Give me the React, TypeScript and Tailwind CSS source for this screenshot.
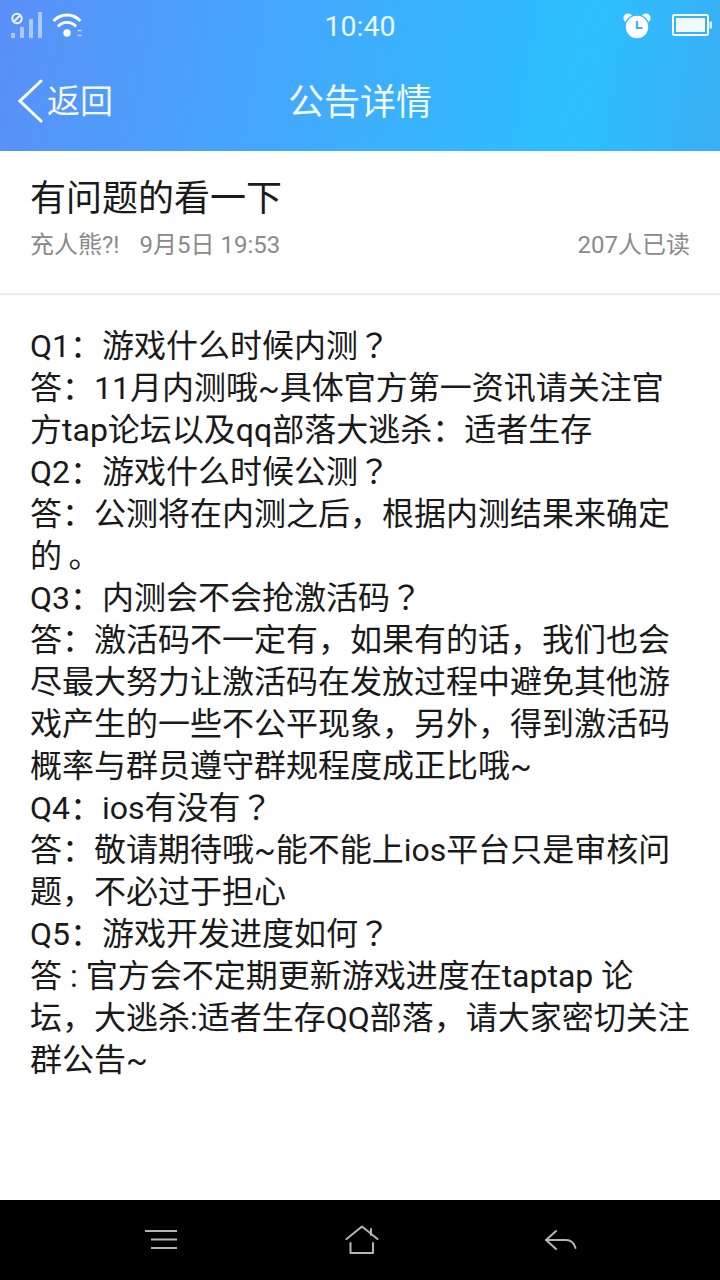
import React from 'react';

const Q = ({ text }: { text: string }) => (
  <p>
    {text}
    <span className="font-['Noto_Sans_CJK_JP'] leading-none">？</span>
  </p>
);

const StatusBar = () => (
  <div className="grid h-[52px] grid-cols-[1fr_auto_1fr] items-center px-[8px]">
    <div className="flex items-center gap-[8px] pl-[2px]">
      <svg width="34" height="28" viewBox="0 0 34 28" fill="white">
        <circle cx="7" cy="6.5" r="4.7" fill="none" stroke="white" strokeWidth="2" opacity="0.9" />
        <path d="M4 9.5 10 3.5" stroke="white" strokeWidth="2" opacity="0.9" />
        <rect x="1" y="21" width="4" height="5" opacity="0.5" />
        <rect x="10" y="15" width="4" height="11" opacity="0.5" />
        <rect x="19" y="7" width="4" height="19" opacity="0.5" />
        <rect x="28" y="0" width="4" height="26" opacity="0.5" />
      </svg>
      <svg width="32" height="28" viewBox="0 0 32 28" fill="none" stroke="white" strokeWidth="2.8">
        <path d="M1.5 9C9 1 21 1 28.5 9" />
        <path d="M6 14.5C10.5 9 19.5 9 24 14.5" />
        <circle cx="15" cy="21" r="3.7" fill="white" stroke="none" />
        <path d="M25.5 18.5h4M25.5 23.5h4" strokeWidth="1.5" opacity="0.6" />
      </svg>
    </div>
    <span className="pt-[2px] text-[28.5px] leading-none text-white/90">10:40</span>
    <div className="flex items-center justify-end gap-[21px]">
      <svg width="28" height="27" viewBox="0 0 28 27">
        <circle cx="5" cy="5" r="4.6" fill="white" />
        <circle cx="23" cy="5" r="4.6" fill="white" />
        <circle cx="14" cy="14" r="12.6" fill="#32b9ff" />
        <circle cx="14" cy="14" r="11.2" fill="white" />
        <path d="M14 8V15H19.5" fill="none" stroke="#36b4ff" strokeWidth="2.2" />
      </svg>
      <svg width="40" height="24" viewBox="0 0 40 24" fill="none">
        <rect x="1" y="1" width="35" height="20" rx="1.5" stroke="white" strokeWidth="2" />
        <rect x="4" y="4" width="29" height="14" fill="white" opacity="0.92" />
        <rect x="37.5" y="7.5" width="2.5" height="7" fill="white" opacity="0.8" />
      </svg>
    </div>
  </div>
);

export default function App() {
  return (
    <div
      className="flex h-[1280px] w-[720px] flex-col overflow-hidden bg-white"
      style={{ fontFamily: 'Roboto, "Noto Sans CJK SC", sans-serif' }}
    >
      <div className="h-[151px] bg-[linear-gradient(100deg,#5a90f8_0%,#2cc0ff_80%,#3aaef5_100%)]">
        <StatusBar />
        <div className="relative flex h-[99px] items-center justify-center pt-[2px]">
          <div className="absolute left-[18px] top-[27px] flex items-center gap-[4px]">
            <svg width="25" height="44" viewBox="0 0 25 44" fill="none" stroke="white" strokeWidth="3" strokeLinecap="round">
              <path d="M23 2 2 22 23 42" />
            </svg>
            <span className="text-[33px] leading-none text-white/95">返回</span>
          </div>
          <h1 className="text-[36px] leading-none text-white/95">公告详情</h1>
        </div>
      </div>

      <div className="h-[144px] border-b-2 border-[#eeeeee] px-[30px] pt-[26px]">
        <h2 className="text-[36px] leading-[44px] text-[#1a1a1a]">有问题的看一下</h2>
        <div className="mt-[6px] flex justify-between text-[24px] leading-[36px] text-[#8a8a8a]">
          <div className="flex gap-[20px]">
            <span>充人熊?!</span>
            <span>9月5日 19:53</span>
          </div>
          <span>207人已读</span>
        </div>
      </div>

      <div className="flex-1 px-[30px] pt-[30px] text-[32px] leading-[42px] text-[#1a1a1a]">
        <Q text="Q1：游戏什么时候内测" />
        <p>答：11月内测哦~具体官方第一资讯请关注官方tap论坛以及qq部落大逃杀：适者生存</p>
        <Q text="Q2：游戏什么时候公测" />
        <p>答：公测将在内测之后，根据内测结果来确定的{'\u2009'}。</p>
        <Q text="Q3：内测会不会抢激活码" />
        <p>答：激活码不一定有，如果有的话，我们也会尽最大努力让激活码在发放过程中避免其他游戏产生的一些不公平现象，另外，得到激活码概率与群员遵守群规程度成正比哦~</p>
        <Q text="Q4：ios有没有" />
        <p>答：敬请期待哦~能不能上ios平台只是审核问题，不必过于担心</p>
        <Q text="Q5：游戏开发进度如何" />
        <p>答 : 官方会不定期更新游戏进度在taptap 论坛，大逃杀:适者生存QQ部落，请大家密切关注群公告~</p>
      </div>

      <div className="flex h-[80px] items-center justify-between bg-black pl-[144px] pr-[143px]">
        <svg width="34" height="22" viewBox="0 0 34 22" fill="none" stroke="#b5b5b5" strokeWidth="2">
          <path d="M1 2H33M7 10.5H33M7 19H33" />
        </svg>
        <svg width="34" height="30" viewBox="0 0 34 30" fill="none" stroke="#b5b5b5" strokeWidth="2" strokeLinecap="round" strokeLinejoin="round">
          <path d="M1.5 14 17 1.5 32.5 14" />
          <path d="M26 4V10" />
          <path d="M5.5 18V28H28V18" />
        </svg>
        <svg width="32" height="22" viewBox="0 0 32 22" fill="none" stroke="#b5b5b5" strokeWidth="2" strokeLinecap="round" strokeLinejoin="round">
          <path d="M11 2 1 11 11 20" />
          <path d="M1 11H21C26 11 29 14 30.5 19" />
        </svg>
      </div>
    </div>
  );
}
